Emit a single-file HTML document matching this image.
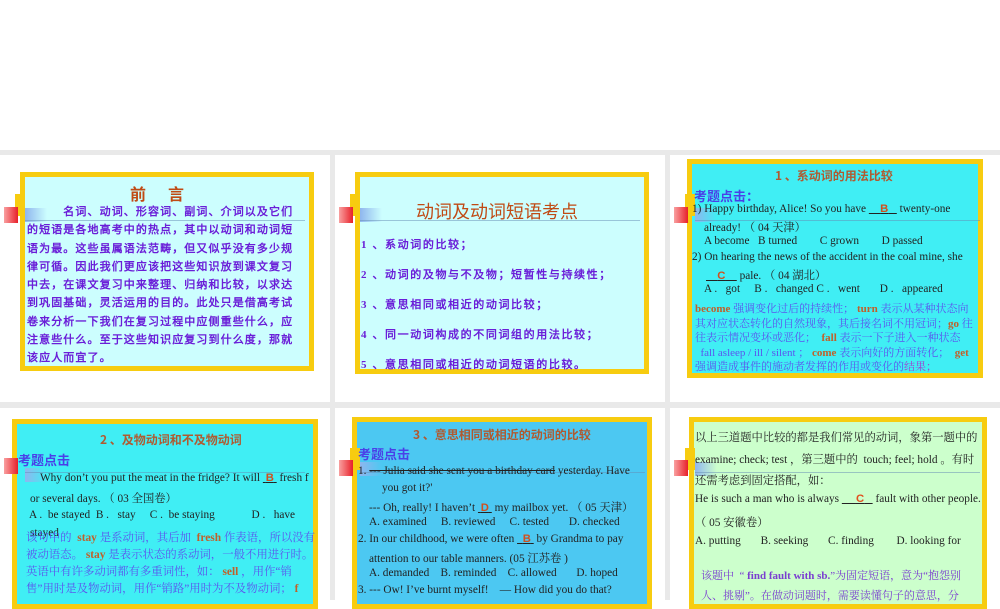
<!DOCTYPE html>
<html><head><meta charset="utf-8"><style>
*{margin:0;padding:0;box-sizing:border-box}
body{width:1000px;height:600px;overflow:hidden;background:#fff;position:relative;font-family:"Liberation Serif","Noto Serif CJK SC",serif}
.bg{position:absolute;left:0;top:150px;width:1000px;height:450px;background:#e9e9e9}
.card{position:absolute;background:#fff}
.box{position:absolute;border:5px solid #f7cc10;overflow:hidden}
.red{position:absolute;width:14px;height:16px;background:linear-gradient(90deg,#f9a0a0,#e8202a);}
.yel{position:absolute;width:10px;height:22px;background:#f7cc10}
.blu{position:absolute;width:22px;height:14px;background:linear-gradient(90deg,#8fb6ee,rgba(160,200,240,0))}
.ln{position:absolute;height:1px;background:rgba(100,140,180,.5)}
.t{position:absolute;white-space:nowrap}
.k{font-family:"Liberation Serif","WenQuanYi Zen Hei",sans-serif;font-weight:bold;color:#6a1ed8;font-size:11px;letter-spacing:1.6px}
.o{color:#c0602a;font-weight:bold}
.bl{color:#5b55ee}
.s{font-size:11.3px;color:#222}
</style></head><body>
<div class="bg"></div>
<div class="card" style="left:0;top:155px;width:330px;height:247px"></div>
<div class="card" style="left:335px;top:155px;width:330px;height:247px"></div>
<div class="card" style="left:670px;top:155px;width:330px;height:247px"></div>
<div class="card" style="left:0;top:408px;width:330px;height:192px"></div>
<div class="card" style="left:335px;top:408px;width:330px;height:192px"></div>
<div class="card" style="left:670px;top:408px;width:330px;height:192px"></div>

<!-- slide 1 -->
<div class="box" style="left:20px;top:172px;width:294px;height:199px;background:#ccfefe"></div>
<div class="yel" style="left:15px;top:194px"></div>
<div class="blu" style="left:25px;top:208px"></div>
<div class="red" style="left:4px;top:207px"></div>
<div class="ln" style="left:25px;top:220px;width:280px"></div>
<div class="t" style="left:130px;top:181px;font-size:16px;font-weight:bold;color:#c04a14;letter-spacing:22px;font-family:'Noto Sans CJK SC',sans-serif">前言</div>
<div class="t k" style="left:27px;top:203px;line-height:18.3px;white-space:normal;width:276px;letter-spacing:1.1px">&emsp;&emsp;&emsp;名词、动词、形容词、副词、介词以及它们的短语是各地高考中的热点，其中以动词和动词短语为最。这些虽属语法范畴，但又似乎没有多少规律可循。因此我们更应该把这些知识放到课文复习中去，在课文复习中来整理、归纳和比较，以求达到巩固基础，灵活运用的目的。此处只是借高考试卷来分析一下我们在复习过程中应侧重些什么，应注意些什么。至于这些知识应复习到什么度，那就该应人而宜了。</div>

<!-- slide 2 -->
<div class="box" style="left:355px;top:172px;width:294px;height:202px;background:#ccfefe"></div>
<div class="yel" style="left:350px;top:194px"></div>
<div class="blu" style="left:360px;top:208px"></div>
<div class="red" style="left:339px;top:207px"></div>
<div class="ln" style="left:360px;top:220px;width:280px"></div>
<div class="t" style="left:416px;top:198px;font-size:18px;color:#c04a14;font-family:'Noto Sans CJK SC',sans-serif">动词及动词短语考点</div>
<div class="t k" style="left:361px;top:236px">1 、系动词的比较；</div>
<div class="t k" style="left:361px;top:266px">2 、动词的及物与不及物；短暂性与持续性；</div>
<div class="t k" style="left:361px;top:296px">3 、意思相同或相近的动词比较；</div>
<div class="t k" style="left:361px;top:326px">4 、同一动词构成的不同词组的用法比较；</div>
<div class="t k" style="left:361px;top:356px">5 、意思相同或相近的动词短语的比较。</div>

<!-- slide 3 -->
<div class="box" style="left:687px;top:159px;width:296px;height:219px;background:#40eef4"></div>
<div class="yel" style="left:685px;top:194px"></div>
<div class="blu" style="left:695px;top:208px"></div>
<div class="red" style="left:674px;top:207px"></div>
<div class="ln" style="left:695px;top:220px;width:285px"></div>
<div class="t" style="left:775px;top:167px;font-size:12px;color:#b05a30;font-weight:bold;font-family:'Noto Sans CJK SC',sans-serif">1 、系动词的用法比较</div>
<div class="t" style="left:694px;top:186px;font-size:13px;color:#4a3fe8;font-weight:bold;font-family:'Noto Sans CJK SC',sans-serif">考题点击：</div>
<div class="t s" style="left:692px;top:203px">1) Happy birthday, Alice! So you have <u>&nbsp;&nbsp;&nbsp;&nbsp;<b style="color:#d0501e;font-family:'Liberation Sans'">B</b>&nbsp;&nbsp;&nbsp;</u> twenty-one</div>
<div class="t s" style="left:704px;top:219px">already! （ 04 天津）</div>
<div class="t s" style="left:704px;top:235px">A become &nbsp;&nbsp;B turned &nbsp;&nbsp;&nbsp;&nbsp;&nbsp;&nbsp;&nbsp;C grown &nbsp;&nbsp;&nbsp;&nbsp;&nbsp;&nbsp;&nbsp;D passed</div>
<div class="t s" style="left:692px;top:251px">2) On hearing the news of the accident in the coal mine, she</div>
<div class="t s" style="left:706px;top:267px"><u>&nbsp;&nbsp;&nbsp;&nbsp;<b style="color:#d0501e;font-family:'Liberation Sans'">C</b>&nbsp;&nbsp;&nbsp;&nbsp;</u> pale. （ 04 湖北）</div>
<div class="t s" style="left:704px;top:283px">A . &nbsp;&nbsp;got &nbsp;&nbsp;&nbsp;&nbsp;B . &nbsp;&nbsp;changed C . &nbsp;&nbsp;went &nbsp;&nbsp;&nbsp;&nbsp;&nbsp;&nbsp;D . &nbsp;&nbsp;appeared</div>
<div class="t bl" style="left:695px;top:302px;font-size:11px;line-height:14.6px;white-space:normal;width:282px"><span class="o">become</span> 强调变化过后的持续性； <span class="o">turn</span> 表示从某种状态向其对应状态转化的自然现象，其后接名词不用冠词；<span class="o">go</span> 往往表示情况变坏或恶化； &nbsp;<span class="o">fall</span> 表示一下子进入一种状态 &nbsp;&nbsp;fall asleep / ill / silent ； <span class="o">come</span> 表示向好的方面转化； &nbsp;<span class="o">get</span> 强调造成事件的施动者发挥的作用或变化的<span style="color:#a040d0">结果；</span></div>

<!-- slide 4 -->
<div class="box" style="left:12px;top:419px;width:306px;height:190px;background:#40eef4"></div>
<div class="blu" style="left:25px;top:468px"></div>
<div class="red" style="left:4px;top:458px"></div>
<div class="ln" style="left:25px;top:472px;width:280px"></div>
<div class="t" style="left:100px;top:431px;font-size:12px;color:#b05a30;font-weight:bold;font-family:'Noto Sans CJK SC',sans-serif">2 、及物动词和不及物动词</div>
<div class="t" style="left:18px;top:450px;font-size:13px;color:#4a3fe8;font-weight:bold;font-family:'Noto Sans CJK SC',sans-serif">考题点击</div>
<div class="t s" style="left:40px;top:472px">Why don’t you put the meat in the fridge? It will <u>&nbsp;<b style="color:#d0501e;font-family:'Liberation Sans'">B</b>&nbsp;</u> fresh f</div>
<div class="t s" style="left:30px;top:490px">or several days. （ 03 全国卷）</div>
<div class="t s" style="left:29px;top:509px">A . &nbsp;be stayed &nbsp;B . &nbsp;&nbsp;stay &nbsp;&nbsp;&nbsp;&nbsp;C . &nbsp;be staying &nbsp;&nbsp;&nbsp;&nbsp;&nbsp;&nbsp;&nbsp;&nbsp;&nbsp;&nbsp;&nbsp;&nbsp;D . &nbsp;&nbsp;have</div>
<div class="t s" style="left:30px;top:527px">stayed</div>
<div class="t bl" style="left:26px;top:530px;font-size:11.4px;line-height:17px;white-space:normal;width:290px">该句中的 &nbsp;<span class="o">stay</span> 是系动词，其后加 &nbsp;<span class="o">fresh</span> 作表语，所以没有被动语态。 <span class="o">stay</span> 是表示状态的系动词，一般不用进行时。英语中有许多动词都有多重词性，如： <span class="o">sell</span> ，用作“销售”用时是及物动词，用作“销路”用时为不及物动词； <span class="o">f</span></div>

<!-- slide 5 -->
<div class="box" style="left:352px;top:417px;width:300px;height:192px;background:#4cc8f2"></div>
<div class="yel" style="left:350px;top:448px"></div>
<div class="blu" style="left:360px;top:462px"></div>
<div class="red" style="left:339px;top:460px"></div>
<div class="ln" style="left:360px;top:472px;width:285px"></div>
<div class="t" style="left:413px;top:426px;font-size:12px;color:#b05a30;font-weight:bold;font-family:'Noto Sans CJK SC',sans-serif">3 、意思相同或相近的动词的比较</div>
<div class="t" style="left:358px;top:444px;font-size:13px;color:#4a3fe8;font-weight:bold;font-family:'Noto Sans CJK SC',sans-serif">考题点击</div>
<div class="t s" style="left:358px;top:465px">1. <s>--- Julia said she sent you a birthday card</s> yesterday. Have</div>
<div class="t s" style="left:382px;top:482px">you got it?'</div>
<div class="t s" style="left:369px;top:499px">--- Oh, really! I haven’t <u>&nbsp;<b style="color:#d0501e;font-family:'Liberation Sans'">D</b>&nbsp;</u> my mailbox yet. （ 05 天津）</div>
<div class="t s" style="left:369px;top:516px">A. examined &nbsp;&nbsp;&nbsp;&nbsp;B. reviewed &nbsp;&nbsp;&nbsp;&nbsp;C. tested &nbsp;&nbsp;&nbsp;&nbsp;&nbsp;&nbsp;D. checked</div>
<div class="t s" style="left:358px;top:533px">2. In our childhood, we were often <u>&nbsp;&nbsp;<b style="color:#d0501e;font-family:'Liberation Sans'">B</b>&nbsp;</u> by Grandma to pay</div>
<div class="t s" style="left:369px;top:550px">attention to our table manners. (05 江苏卷 )</div>
<div class="t s" style="left:369px;top:567px">A. demanded &nbsp;&nbsp;&nbsp;B. reminded &nbsp;&nbsp;&nbsp;C. allowed &nbsp;&nbsp;&nbsp;&nbsp;&nbsp;&nbsp;D. hoped</div>
<div class="t s" style="left:358px;top:584px">3. --- Ow! I’ve burnt myself! &nbsp;&nbsp;&nbsp;— How did you do that?</div>

<!-- slide 6 -->
<div class="box" style="left:689px;top:417px;width:298px;height:192px;background:#ccffcc"></div>
<div class="yel" style="left:685px;top:448px"></div>
<div class="blu" style="left:695px;top:462px"></div>
<div class="red" style="left:674px;top:460px"></div>
<div class="ln" style="left:695px;top:472px;width:285px"></div>
<div class="t s" style="left:695px;top:429px">以上三道题中比较的都是我们常见的动词，象第一题中的</div>
<div class="t s" style="left:695px;top:451px">examine; check; test ，第三题中的 &nbsp;touch; feel; hold 。有时</div>
<div class="t s" style="left:695px;top:472px">还需考虑到固定搭配，如：</div>
<div class="t s" style="left:695px;top:493px">He is such a man who is always <u>&nbsp;&nbsp;&nbsp;&nbsp;&nbsp;<b style="color:#e0501e;font-family:'Liberation Sans'">C</b>&nbsp;&nbsp;&nbsp;</u> fault with other people.</div>
<div class="t s" style="left:695px;top:514px">（ 05 安徽卷）</div>
<div class="t s" style="left:695px;top:535px">A. putting &nbsp;&nbsp;&nbsp;&nbsp;&nbsp;&nbsp;B. seeking &nbsp;&nbsp;&nbsp;&nbsp;&nbsp;&nbsp;C. finding &nbsp;&nbsp;&nbsp;&nbsp;&nbsp;&nbsp;&nbsp;D. looking for</div>
<div class="t" style="left:701px;top:566px;font-size:11px;color:#7a3ed0;line-height:20px;white-space:normal;width:272px">该题中 &nbsp;“ <b>find fault with sb.</b>”为固定短语，意为“抱怨别人、挑剔”。在做动词题时，需要读懂句子的意思，分</div>
</body></html>
